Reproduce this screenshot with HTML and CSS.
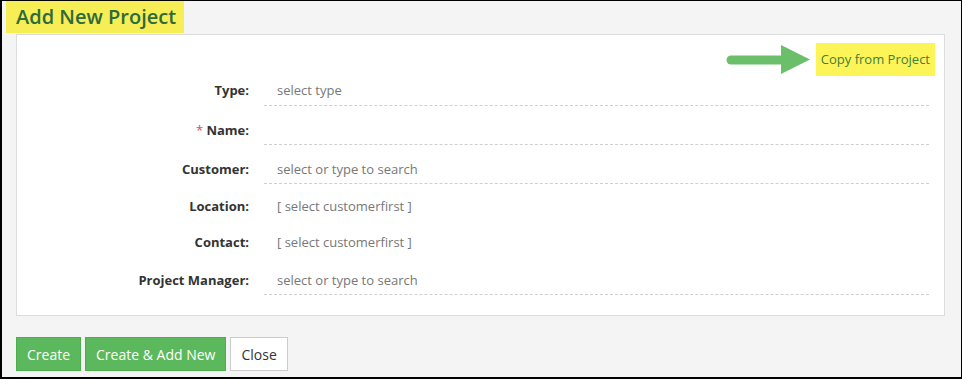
FILE: index.html
```html
<!DOCTYPE html>
<html lang="en">
<head>
    <meta charset="UTF-8">
    <meta name="viewport" content="width=device-width, initial-scale=1.0">
    <title>Add New Project</title>
    <link rel="stylesheet" href="styles.css">
</head>
<body>
    <div class="frame">
        <h1 class="page-title">Add New Project</h1>

        <div class="panel">
            <div class="panel-top">
                <svg class="hint-arrow" width="86" height="32" viewBox="0 0 86 32">
                    <line x1="5" y1="16" x2="58" y2="16" stroke="#6cbf6a" stroke-width="9" stroke-linecap="round"/>
                    <polygon points="55,1 84,15.5 55,30" fill="#6cbf6a"/>
                </svg>
                <a class="copy-link" href="#">Copy from Project</a>
            </div>

            <div class="form">
                <div class="form-row">
                    <label class="form-label">Type:</label>
                    <div class="form-field">select type</div>
                </div>
                <div class="form-row">
                    <label class="form-label"><span class="required">*</span> Name:</label>
                    <div class="form-field"></div>
                </div>
                <div class="form-row">
                    <label class="form-label">Customer:</label>
                    <div class="form-field">select or type to search</div>
                </div>
                <div class="form-row static">
                    <label class="form-label">Location:</label>
                    <div class="form-field">[ select customerfirst ]</div>
                </div>
                <div class="form-row static">
                    <label class="form-label">Contact:</label>
                    <div class="form-field">[ select customerfirst ]</div>
                </div>
                <div class="form-row">
                    <label class="form-label">Project Manager:</label>
                    <div class="form-field">select or type to search</div>
                </div>
            </div>
        </div>

        <div class="actions">
            <button class="btn btn-green">Create</button>
            <button class="btn btn-green">Create &amp; Add New</button>
            <button class="btn btn-white">Close</button>
        </div>
    </div>
</body>
</html>
```

FILE: styles.css
```css
* {
    box-sizing: border-box;
    margin: 0;
    padding: 0;
}

html, body {
    width: 962px;
    height: 379px;
    overflow: hidden;
}

body {
    font-family: 'Open Sans', 'Noto Sans', Arial, sans-serif;
    background-color: #fff;
    color: #333;
}

.frame {
    width: 962px;
    height: 379px;
    background-color: #f4f4f4;
    border: 1px solid #000;
    border-left-width: 2px;
    border-bottom-width: 2px;
}

/* Title */
.page-title {
    display: inline-block;
    margin-left: 4px;
    padding: 3px 8px 4px 10px;
    height: 32px;
    background-color: #f7ee56;
    color: #2e6a3b;
    font-size: 20px;
    font-weight: 600;
    line-height: 25px;
}

/* Panel */
.panel {
    margin: 1px 16px 0 14px;
    background-color: #fff;
    border: 1px solid #dcdcdc;
    padding: 0 15px 20px 0;
}

.panel-top {
    display: flex;
    justify-content: flex-end;
    align-items: center;
    padding-top: 8px;
    margin-right: -6px;
}

.hint-arrow {
    display: block;
    margin-right: 4px;
}

.copy-link {
    display: block;
    height: 33px;
    padding: 0 5px;
    background-color: #fdf457;
    color: #3f7f3f;
    font-size: 13px;
    line-height: 33px;
    text-decoration: none;
}

/* Form rows */
.form-row {
    display: flex;
    font-size: 13px;
    line-height: 20px;
}

.form-label {
    width: 232px;
    flex-shrink: 0;
    padding: 14px 0 4px;
    text-align: right;
    font-weight: 700;
    color: #333;
}

.form-field {
    flex: 1;
    margin-left: 15px;
    padding: 14px 0 4px 13px;
    min-height: 39px;
    border-bottom: 1px dashed #cfcfcf;
    color: #777;
}

.form-row:first-child .form-label,
.form-row:first-child .form-field {
    padding-top: 4px;
    padding-bottom: 5px;
}

.form-row:first-child .form-field {
    min-height: 30px;
}

.form-row.static .form-label,
.form-row.static .form-field {
    padding-top: 12px;
}

.form-row.static .form-field {
    min-height: 36px;
    border-bottom: none;
}

.required {
    color: #e8474c;
    font-weight: 400;
}

/* Buttons */
.actions {
    display: flex;
    gap: 4px;
    margin: 21px 0 0 14px;
}

.btn {
    height: 34px;
    padding: 0 10px;
    font-family: 'Open Sans', 'Noto Sans', Arial, sans-serif;
    font-size: 14px;
    border: 1px solid;
    cursor: pointer;
}

.btn-green {
    background-color: #5cb85c;
    border-color: #4cae4c;
    color: #fff;
}

.btn-white {
    background-color: #fff;
    border-color: #ccc;
    color: #333;
}
```
